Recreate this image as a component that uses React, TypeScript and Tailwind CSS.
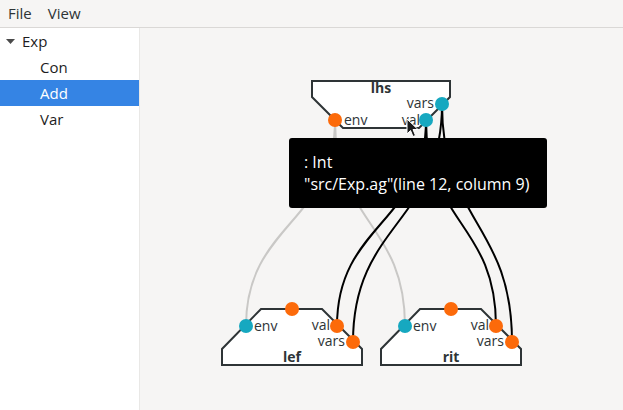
import React from "react";

const ORANGE = "#fc6a0a";
const TEAL = "#16a8c0";
const STROKE = "#2e3436";
const FONT = '"Open Sans", "Noto Sans", sans-serif';

function Node({
  x,
  label,
}: {
  x: number;
  label: string;
}) {
  const pts = [
    [x + 39, 309],
    [x + 100, 309],
    [x + 140, 349],
    [x + 140, 365],
    [x, 365],
    [x, 349],
  ]
    .map((p) => p.join(","))
    .join(" ");
  return (
    <g>
      <polygon points={pts} fill="#ffffff" stroke={STROKE} strokeWidth={2} strokeLinejoin="miter" />
      <text x={x + 70} y={362} textAnchor="middle" fontSize={14} fontWeight={700} fill={STROKE} fontFamily={FONT}>
        {label}
      </text>
      <text x={x + 32} y={331} fontSize={14} fill={STROKE} fontFamily={FONT}>
        env
      </text>
      <text x={x + 108} y={330} textAnchor="end" fontSize={14} fill={STROKE} fontFamily={FONT}>
        val
      </text>
      <text x={x + 123} y={346} textAnchor="end" fontSize={14} fill={STROKE} fontFamily={FONT}>
        vars
      </text>
    </g>
  );
}

function Ports({ x }: { x: number }) {
  return (
    <g>
      <circle cx={x + 70} cy={309} r={7} fill={ORANGE} />
      <circle cx={x + 24} cy={326} r={7} fill={TEAL} />
      <circle cx={x + 115} cy={326} r={7} fill={ORANGE} />
      <circle cx={x + 131} cy={342} r={7} fill={ORANGE} />
    </g>
  );
}

function wire(x1: number, y1: number, x2: number, y2: number) {
  const my = (y1 + y2) / 2;
  return `M${x1},${y1} C${x1},${my} ${x2},${my} ${x2},${y2}`;
}

export default function App() {
  return (
    <div
      className="w-[623px] h-[410px] flex flex-col overflow-hidden bg-[#f6f5f4] text-[#2e3436]"
      style={{ fontFamily: FONT }}
    >
      <div className="h-[28px] flex items-center gap-[16px] px-[8px] text-[15px] border-b border-[#dad8d6] bg-[#f6f5f4] shrink-0">
        <span>File</span>
        <span>View</span>
      </div>
      <div className="flex flex-1 min-h-0">
        <div className="w-[139px] bg-white shrink-0 text-[15px]">
          <div className="h-[26px] flex items-center">
            <svg width="22" height="26" viewBox="0 0 22 26" className="shrink-0">
              <polygon points="6,11 15,11 10.5,16" fill="#4a4a4a" />
            </svg>
            <span className="text-[#1d1d1d]">Exp</span>
          </div>
          <div className="h-[26px] flex items-center pl-[40px] text-[#1d1d1d]">Con</div>
          <div className="h-[26px] flex items-center pl-[40px] bg-[#3584e4] text-white">Add</div>
          <div className="h-[26px] flex items-center pl-[40px] text-[#1d1d1d]">Var</div>
        </div>
        <div className="relative flex-1 border-l border-[#e9e8e6] bg-[#f6f5f4]">
          <svg className="absolute inset-0" width="483" height="382" viewBox="0 0 483 382">
            <g transform="translate(-140,-28)">
              {/* gray wires */}
              <path d={wire(335, 120, 246, 326)} fill="none" stroke="#c9c8c6" strokeWidth={2} />
              <path d={wire(335, 120, 405, 326)} fill="none" stroke="#c9c8c6" strokeWidth={2} />
              {/* black wires */}
              <path d={wire(426, 120, 337, 326)} fill="none" stroke="#000" strokeWidth={2} />
              <path d={wire(442, 104, 353, 342)} fill="none" stroke="#000" strokeWidth={2} />
              <path d={wire(426, 120, 496, 326)} fill="none" stroke="#000" strokeWidth={2} />
              <path d={wire(442, 104, 512, 342)} fill="none" stroke="#000" strokeWidth={2} />

              {/* lhs node */}
              <polygon
                points="312,81 450,81 450,97 419,128 343,128 312,97"
                fill="#ffffff"
                stroke={STROKE}
                strokeWidth={2}
              />
              <text x={381} y={93} textAnchor="middle" fontSize={14} fontWeight={700} fill={STROKE} fontFamily={FONT}>
                lhs
              </text>
              <text x={344} y={125} fontSize={14} fill={STROKE} fontFamily={FONT}>
                env
              </text>
              <text x={420} y={125} textAnchor="end" fontSize={14} fill={STROKE} fontFamily={FONT}>
                val
              </text>
              <text x={434} y={108} textAnchor="end" fontSize={14} fill={STROKE} fontFamily={FONT}>
                vars
              </text>
              <circle cx={335} cy={120} r={7} fill={ORANGE} />
              <circle cx={426} cy={120} r={7} fill={TEAL} />
              <circle cx={442} cy={104} r={7} fill={TEAL} />

              <Node x={222} label="lef" />
              <Node x={381} label="rit" />
              <Ports x={222} />
              <Ports x={381} />

              {/* cursor */}
              <path
                d="M407,119 L407,134 L410.5,130.5 L413,136.5 L415.5,135.5 L413,129.5 L418,129.5 Z"
                fill="#1a1a1a"
                stroke="#ffffff"
                strokeWidth={1}
                strokeLinejoin="round"
              />
            </g>
          </svg>
          <div className="absolute left-[149px] top-[110px] w-[258px] h-[70px] bg-black rounded-[3px] text-white text-[16px] leading-[22px] pl-[15px] pt-[13px]">
            <div>: Int</div>
            <div>"src/Exp.ag"(line 12, column 9)</div>
          </div>
        </div>
      </div>
    </div>
  );
}
